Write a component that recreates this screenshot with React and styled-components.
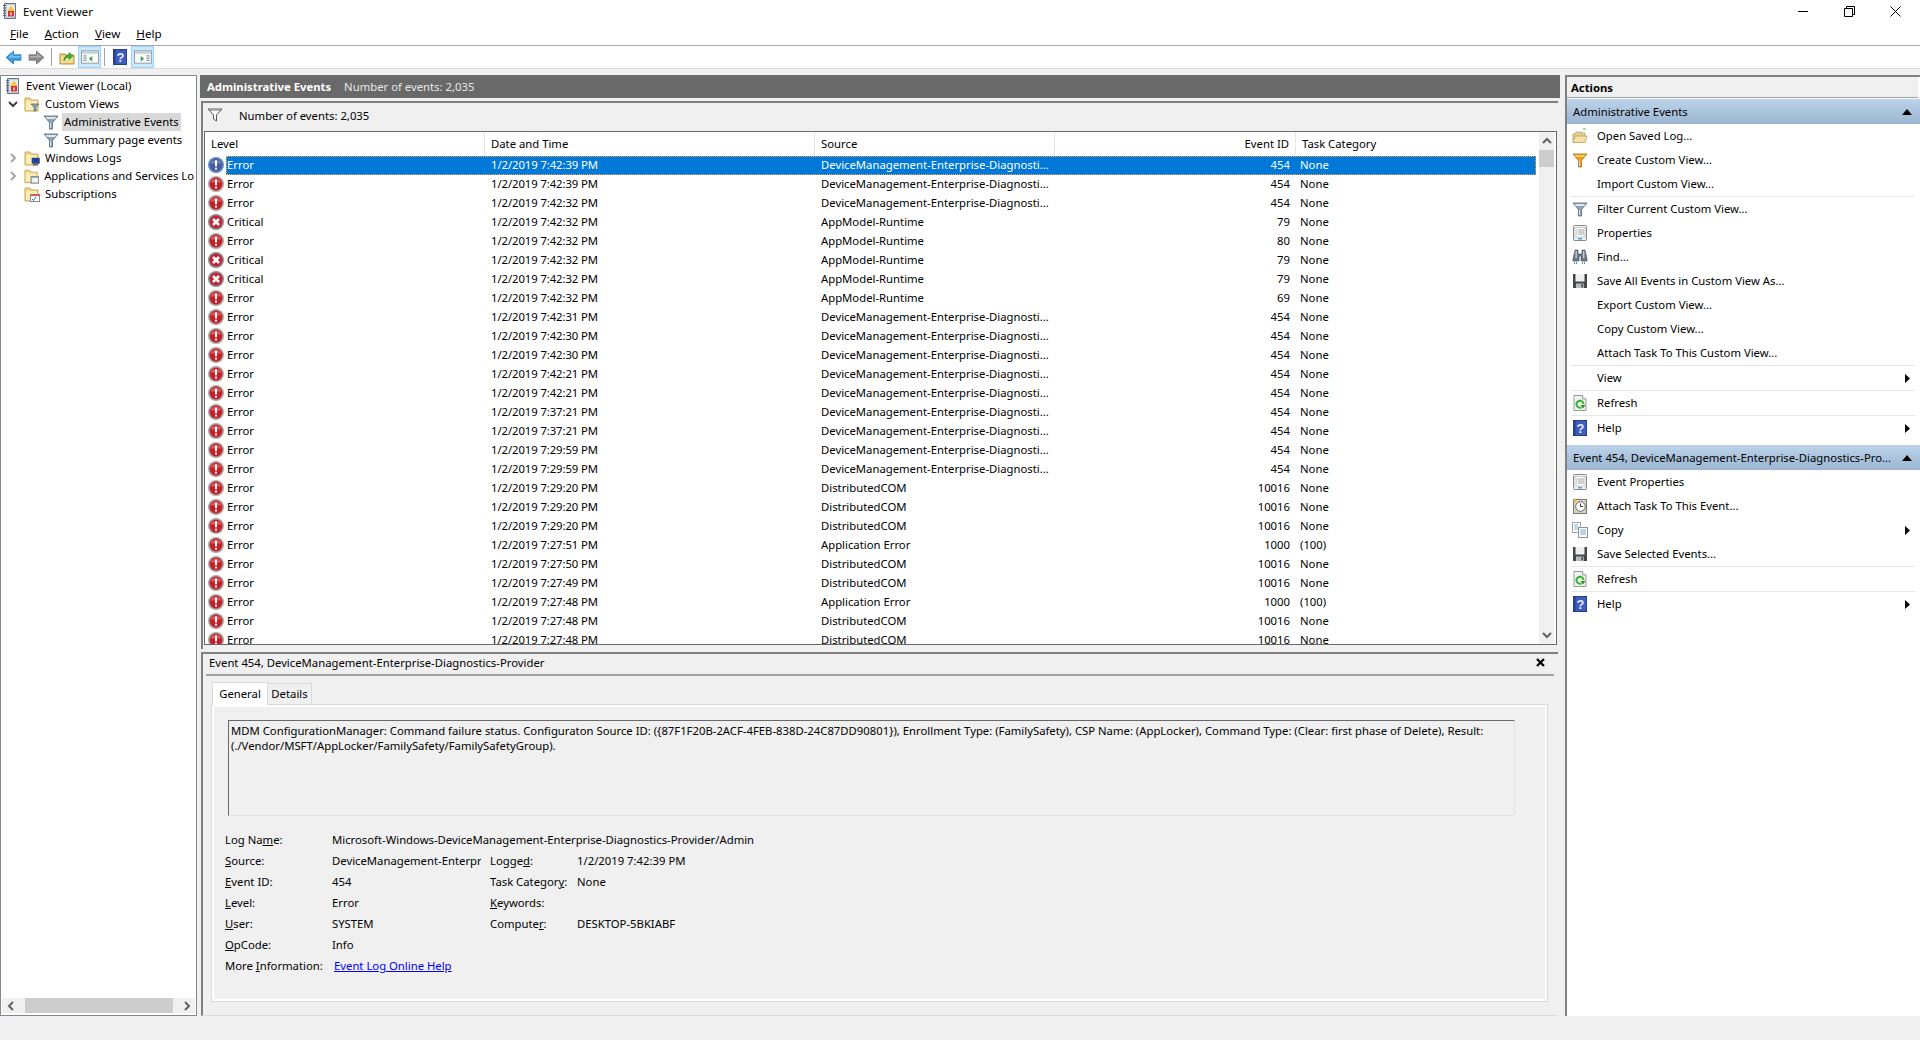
import React from 'react';
import styled, { createGlobalStyle } from 'styled-components';

const GlobalStyle = createGlobalStyle`
  html, body { margin: 0; padding: 0; background: #f0f0f0; overflow: hidden; }
  body { font-family: 'Noto Sans', 'Open Sans', sans-serif; font-size: 11.3px; color: #000; }
  * { box-sizing: border-box; }
  u { text-underline-offset: 1px; }
`;

const Window = styled.div`
  width: 1920px;
  height: 1040px;
  display: flex;
  flex-direction: column;
  background: #f0f0f0;
`;

const TitleBar = styled.div`
  height: 22px;
  background: #fff;
  display: flex;
  align-items: center;
  padding: 0 2px 0 2px;
`;
const TitleText = styled.span`
  margin-left: 5px;
  font-size: 11.6px;
  flex: 1;
`;
const WinButton = styled.div`
  width: 46px;
  height: 22px;
  display: flex;
  align-items: center;
  justify-content: center;
`;

const MenuBar = styled.div`
  height: 24px;
  background: #fff;
  border-bottom: 1px solid #a9a9a9;
  display: flex;
  align-items: center;
  padding: 0 0 0 10px;
  gap: 16px;
  font-size: 11.6px;
`;

const Toolbar = styled.div`
  height: 23px;
  background: #fff;
  border-bottom: 1px solid #dcdcdc;
  display: flex;
  align-items: center;
  padding-left: 2px;
`;
const ToolButton = styled.div`
  width: 23px;
  height: 22px;
  display: flex;
  align-items: center;
  justify-content: center;
  background: ${p => (p.$on ? '#cce8ff' : 'transparent')};
  border: 1px solid ${p => (p.$on ? '#99d1ff' : 'transparent')};
`;
const ToolSep = styled.div`
  width: 1px;
  height: 18px;
  background: #a0a0a0;
  margin: 0 ${p => p.$m || 3}px;
`;

const Main = styled.div`
  flex: 1;
  display: flex;
  padding-top: 6px;
  min-height: 0;
`;

/* left tree */
const TreePanel = styled.div`
  width: 197px;
  height: 941px;
  background: #fff;
  border: 1px solid #828790;
  display: flex;
  flex-direction: column;
`;
const TreeBody = styled.div`
  flex: 1;
  padding-top: 1px;
  overflow: hidden;
`;
const TreeRow = styled.div`
  height: 18px;
  display: flex;
  align-items: center;
  padding-left: ${p => p.$indent}px;
  white-space: nowrap;
`;
const TreeLabel = styled.span`
  margin-left: 3px;
  padding: 0 2px;
  height: 18px;
  line-height: 17px;
  background: ${p => (p.$on ? '#d9d9d9' : 'transparent')};
`;
const Twist = styled.span`
  width: 16px;
  height: 16px;
  margin-right: 3px;
  display: flex;
  align-items: center;
  justify-content: center;
  flex: none;
`;
const HScroll = styled.div`
  height: 15px;
  margin: 0 1px 2px;
  background: #f0f0f0;
  display: flex;
  align-items: center;
  justify-content: space-between;
`;
const HThumb = styled.div`
  width: 148px;
  height: 15px;
  background: #cdcdcd;
`;
const ScrollArrow = styled.span`
  width: 17px;
  height: 15px;
  display: flex;
  align-items: center;
  justify-content: center;
`;

/* center */
const Center = styled.div`
  width: 1360px;
  margin-left: 3px;
  display: flex;
  flex-direction: column;
`;
const DarkHeader = styled.div`
  height: 23px;
  background: #696969;
  color: #fff;
  display: flex;
  align-items: center;
  padding: 0 0 1px 7px;
  flex: none;
`;
const DarkTitle = styled.b`
  font-weight: 700;
`;
const DarkCount = styled.span`
  margin-left: 13px;
  color: #e8e8e8;
`;
const ListPane = styled.div`
  margin: 3px 2px 0 1px;
  height: 548px;
  border-top: 2px solid #808080;
  border-left: 2px solid #808080;
  padding-left: 1px;
  flex: none;
  display: flex;
  flex-direction: column;
`;
const FilterBar = styled.div`
  height: 28px;
  display: flex;
  align-items: center;
  flex: none;
  padding: 0 0 4px 3px;
`;
const FilterText = styled.span`
  margin-left: 16px;
`;
const ListFrame = styled.div`
  height: 514px;
  flex: none;
  margin-right: 1px;
  border: 1px solid #696969;
  background: #fff;
  display: flex;
`;
const ListScroller = styled.div`
  flex: 1;
  min-width: 0;
  overflow: hidden;
  display: flex;
  flex-direction: column;
`;
const HeaderRow = styled.div`
  height: 24px;
  flex: none;
  display: grid;
  grid-template-columns: 280px 330px 240px 241px 241px;
`;
const HeaderCell = styled.div`
  display: flex;
  align-items: center;
  padding: ${p => (p.$right ? '0 6px 1px 0' : '0 0 1px 6px')};
  justify-content: ${p => (p.$right ? 'flex-end' : 'flex-start')};
  border-right: 1px solid #e5e5e5;
`;
const Row = styled.div`
  height: 19px;
  flex: none;
  display: flex;
`;
const RowIcon = styled.div`
  width: 21px;
  flex: none;
  display: flex;
  align-items: center;
  justify-content: center;
  padding-bottom: 1px;
`;
const RowBody = styled.div`
  flex: 1;
  min-width: 0;
  display: grid;
  grid-template-columns: 259px 330px 240px 241px 241px;
  align-items: center;
  padding-bottom: 2px;
  background: ${p => (p.$on ? '#0078d7' : 'transparent')};
  color: ${p => (p.$on ? '#fff' : '#000')};
  outline: ${p => (p.$on ? '1px dotted #f2a65a' : 'none')};
  outline-offset: -1px;
`;
const Cell = styled.div`
  white-space: nowrap;
  overflow: hidden;
  padding-left: ${p => p.$pl ?? 6}px;
  padding-right: ${p => p.$pr ?? 0}px;
  text-align: ${p => (p.$right ? 'right' : 'left')};
  letter-spacing: ${p => (p.$tight ? '-0.08px' : 'normal')};
`;
const VScroll = styled.div`
  width: 15px;
  margin: 0 2px 0 3px;
  background: #f0f0f0;
  display: flex;
  flex-direction: column;
  align-items: center;
  flex: none;
`;
const VArrow = styled.div`
  height: 18px;
  width: 15px;
  flex: none;
  display: flex;
  align-items: center;
  justify-content: center;
`;
const VThumb = styled.div`
  height: 17px;
  width: 15px;
  background: #cdcdcd;
`;
const VSpace = styled.div`
  flex: 1;
`;

const DetailPane = styled.div`
  margin: 3px 2px 0 1px;
  height: 364px;
  flex: none;
  border-top: 2px solid #808080;
  border-left: 2px solid #808080;
  border-bottom: 1px solid #dcdcdc;
  display: flex;
  flex-direction: column;
`;
const DetailTitle = styled.div`
  height: 22px;
  flex: none;
  margin: 0 4px 0 3px;
  border-bottom: 2px solid #a0a0a0;
  display: flex;
  align-items: center;
  justify-content: space-between;
  padding: 0 9px 3px 3px;
`;
const TabStrip = styled.div`
  display: flex;
  align-items: flex-end;
  height: 22px;
  margin: 6px 0 0 9px;
  flex: none;
`;
const Tab = styled.div`
  height: ${p => (p.$on ? 23 : 21)}px;
  width: ${p => (p.$on ? 56 : 44)}px;
  padding-bottom: 2px;
  background: ${p => (p.$on ? '#fff' : '#f0f0f0')};
  border: 1px solid #d9d9d9;
  border-bottom: none;
  border-left-width: ${p => (p.$on ? 1 : 0)}px;
  display: flex;
  align-items: center;
  justify-content: center;
  margin-bottom: ${p => (p.$on ? -1 : 0)}px;
  position: relative;
  z-index: ${p => (p.$on ? 1 : 0)};
`;
const TabPanel = styled.div`
  height: 298px;
  flex: none;
  margin: 0 10px 0 8px;
  border: 1px solid #d9d9d9;
  outline: 2px solid #fff;
  outline-offset: -3px;
  padding: 15px 32px 0 16px;
`;
const MessageBox = styled.div`
  height: 96px;
  border-top: 1px solid #696969;
  border-left: 1px solid #696969;
  border-right: 1px solid #e3e3e3;
  border-bottom: 1px solid #e3e3e3;
  padding: 2px 2px;
  line-height: 15px;
  white-space: nowrap;
  overflow: hidden;
`;
const Fields = styled.div`
  display: grid;
  grid-template-columns: 107px 158px 87px 1fr;
  grid-auto-rows: 21px;
  align-items: center;
  margin: 13px 0 0 -3px;
  white-space: nowrap;
`;
const Value = styled.div`
  white-space: nowrap;
  overflow: hidden;
  grid-column: ${p => p.$span || 'auto'};
  margin-right: ${p => p.$mr || 0}px;
`;
const OnlineHelp = styled.a`
  color: #0000ff;
  text-decoration: underline;
  margin-left: 2px;
`;

/* right */
const ActionsPane = styled.div`
  width: 355px;
  margin-left: 5px;
  height: 941px;
  border-top: 2px solid #808080;
  border-left: 2px solid #808080;
  background: #fff;
  display: flex;
  flex-direction: column;
`;
const ActionsTitle = styled.div`
  height: 21px;
  flex: none;
  background: #f0f0f0;
  border-bottom: 1px solid #a0a0a0;
  font-weight: 700;
  display: flex;
  align-items: center;
  padding-left: 4px;
  margin-right: 2px;
`;
const GroupHeader = styled.div`
  height: 25px;
  flex: none;
  margin: ${p => (p.$top ? '5px 0 0' : '1px 0 0')};
  background: linear-gradient(#bcd3ea, #9bb6d2);
  display: flex;
  align-items: center;
  justify-content: space-between;
  padding: 0 8px 0 6px;
  white-space: nowrap;
`;
const ActionItem = styled.div`
  height: 24px;
  flex: none;
  display: flex;
  align-items: center;
  padding: 0 10px 0 4px;
`;
const ActionIcon = styled.span`
  width: 17px;
  height: 17px;
  flex: none;
  display: flex;
  align-items: center;
  justify-content: center;
  margin-right: 9px;
`;
const ActionText = styled.span`
  flex: 1;
  margin-top: -2px;
`;
const ActionSep = styled.div`
  height: 1px;
  flex: none;
  background: #e6e6e6;
  margin: 0 5px 0 4px;
`;

const StatusBar = styled.div`
  height: 24px;
`;

/* drawings */
const Svg = ({ s = 16, children }) => (
  <svg width={s} height={s} viewBox="0 0 16 16">{children}</svg>
);

const ErrorIcon = ({ on }) => (
  <Svg>
    <circle cx="8" cy="8" r="8" fill={on ? '#5f90c4' : '#a8a8a8'} />
    <circle cx="8" cy="8" r="6.4" fill={on ? '#4a5aa0' : '#c41f28'} />
    <path d="M2.6 6.5a5.6 4.6 0 0 1 10.8 0z" fill={on ? '#7482bc' : '#e4565c'} />
    <rect x="7" y="3.2" width="2" height="6.3" rx=".8" fill="#fff" />
    <rect x="7" y="10.5" width="2" height="2.2" rx=".8" fill="#fff" />
  </Svg>
);
const CriticalIcon = () => (
  <Svg>
    <circle cx="8" cy="8" r="8" fill="#8c8c8c" />
    <circle cx="8" cy="8" r="6.4" fill="#c02436" />
    <path d="M5 5l6 6M11 5l-6 6" stroke="#fff" strokeWidth="2.6" />
  </Svg>
);
const LogIcon = () => (
  <Svg>
    <path d="M2.5 .5h11v15h-11z" fill="#c4cede" stroke="#66748a" />
    <path d="M1 2.5h3M1 5h3M1 7.5h3M1 10h3M1 12.5h3" stroke="#5a6470" />
    <path d="M5 2h8v12H5z" fill="#e6eaf2" />
    <path d="M9 2.5l3.8 6H5.2z" fill="#f2c830" />
    <rect x="6" y="8" width="6" height="5.5" fill="#d03030" />
    <rect x="8.4" y="9.2" width="1.2" height="3.2" fill="#fff" />
  </Svg>
);
const Folder = () => (
  <>
    <path d="M1 2h5l1 2h7v11H1z" fill="#f3d98c" stroke="#c9a855" />
    <rect x="2" y="5" width="11" height="9" fill="#fbeeb8" />
  </>
);
const FolderFilter = () => (
  <Svg>
    <Folder />
    <path d="M7 8h8l-3 3.5V15h-2v-3.5z" fill="#8aa0b4" stroke="#5a6c80" strokeWidth=".7" />
  </Svg>
);
const FolderMonitor = () => (
  <Svg>
    <Folder />
    <rect x="8" y="8" width="7.5" height="5.5" fill="#1c3fa8" stroke="#555" strokeWidth=".6" />
    <rect x="9" y="14" width="5" height="1.5" fill="#666" />
  </Svg>
);
const FolderWindow = () => (
  <Svg>
    <Folder />
    <rect x="7.5" y="8.5" width="8" height="7" fill="#f2f2f2" stroke="#777" />
    <rect x="7.5" y="8.5" width="8" height="1.6" fill="#9aa" />
  </Svg>
);
const FolderCalendar = () => (
  <Svg>
    <Folder />
    <rect x="6.5" y="8.5" width="9" height="7" fill="#fff" stroke="#888" />
    <rect x="6.5" y="8.5" width="9" height="1.6" fill="#d55" />
    <path d="M8 13l1.5 1.5L12 11" stroke="#2a6fd0" fill="none" />
  </Svg>
);
const Funnel = ({ top = '#dfe7ee', body = '#8ea3b6', line = '#53677a' }) => (
  <Svg>
    <path d="M1 2h14L9.5 8.5V15h-3V8.5z" fill={body} stroke={line} strokeWidth=".8" />
    <path d="M2.5 3h11l-1.6 2H4.1z" fill={top} />
    <path d="M7 9h1v5H7z" fill="#dfe7ee" />
  </Svg>
);
const OutlineFunnel = () => (
  <Svg>
    <path d="M1 2h14L9.5 8v6l-3-2V8z" fill="#fff" stroke="#555" />
    <path d="M3 3.5h10" stroke="#aaa" />
  </Svg>
);
const ArrowIcon = ({ right, fill, edge }) => (
  <Svg s={17}>
    <g transform={right ? 'translate(16 0) scale(-1 1)' : undefined}>
      <path d="M1 8l7-6v3.5h7v5H8V14z" fill={fill} stroke={edge} strokeWidth=".8" />
      <path d="M3 8l4.5-4v2.5h7V8z" fill="#fff" opacity=".35" />
    </g>
  </Svg>
);
const FolderUp = () => (
  <Svg>
    <path d="M1 5h5l1 1h8v9H1z" fill="#ecc971" stroke="#b8953f" />
    <rect x="2" y="7" width="12" height="7" fill="#f6dd94" />
    <path d="M5 12c0-4 2-6 5-6V3.5L14 7l-4 3.5V8c-2 0-4 1-5 4z" fill="#3fb33f" stroke="#1d7a1d" strokeWidth=".6" />
  </Svg>
);
const HelpIcon = ({ s = 16 }) => (
  <Svg s={s}>
    <rect x="1.5" y="0.5" width="13" height="15" fill="#3c5cc0" stroke="#2a3f80" />
    <rect x="1.5" y="0.5" width="2" height="15" fill="#2a4088" />
    <text x="8.5" y="13" fontSize="13" fontFamily="Liberation Sans" fontWeight="700" fill="#e8ecff" textAnchor="middle">?</text>
  </Svg>
);
const PaneIcon = ({ right }) => (
  <Svg s={18}>
    <rect x=".5" y="2.5" width="15" height="11" fill="#fafafa" stroke="#8a98a4" strokeWidth=".8" />
    <rect x="1" y="3" width="14" height="2" fill="#c0ccd6" />
    <path d={right ? 'M11 7h3M11 9h3M11 11h3' : 'M2 7h3M2 9h3M2 11h3'} stroke="#8a9aa6" strokeWidth=".9" />
    <path d={right ? 'M6 7l3 2.5-3 2.5z' : 'M10 7L7 9.5l3 2.5z'} fill="#3ba63b" />
  </Svg>
);
const OpenFolder = () => (
  <Svg>
    <path d="M1 6h2l1-2h4l1 1h4v9H1z" fill="#e6cf94" stroke="#b09855" strokeWidth=".7" />
    <path d="M3 8h12l-2 6.5H1z" fill="#f4e1a8" stroke="#b09855" strokeWidth=".7" />
    <path d="M11 1h3" stroke="#3cc83c" />
    <path d="M5 3h6v1H5z" fill="#cfe4f4" />
  </Svg>
);
const PropertiesIcon = () => (
  <Svg>
    <rect x="1.5" y="0.5" width="13" height="15" rx="1" fill="#f2f2f2" stroke="#8a8a8a" />
    <rect x="3" y="2.5" width="10" height="9.5" fill="#fff" stroke="#b5b5b5" strokeWidth=".7" />
    <path d="M6 5h6M6 7h6M6 9h6" stroke="#8a8a8a" strokeWidth=".8" />
    <path d="M4 5h1M4 7h1M4 9h1" stroke="#5a8ac0" strokeWidth=".8" />
    <rect x="6" y="13" width="4" height="1.5" fill="#3aa8e8" />
  </Svg>
);
const BinocularsIcon = () => (
  <Svg>
    <path d="M3 1h3v4h4V1h3l2 9v2H9V7H7v5H1v-2z" fill="#6c7a88" stroke="#3c4650" strokeWidth=".6" />
    <rect x="3.5" y="2" width="1.4" height="7" fill="#c4ccd4" />
    <rect x="11" y="2" width="1.4" height="7" fill="#c4ccd4" />
    <path d="M2 14h4M10 14h4" stroke="#3a98e0" strokeWidth="2" strokeDasharray="1 1" />
  </Svg>
);
const SaveIcon = () => (
  <Svg>
    <path d="M1 1h14v14H1z" fill="#44484c" />
    <rect x="3.5" y="1" width="9" height="7.5" fill="#eef0f2" />
    <rect x="4" y="10.5" width="8" height="4.5" fill="#b8bcc0" />
    <rect x="9.5" y="11" width="1.6" height="3.5" fill="#44484c" />
  </Svg>
);
const RefreshIcon = () => (
  <Svg>
    <path d="M2 .5h8.5l3.5 3.5v11.5H2z" fill="#f2f2f2" stroke="#9a9a9a" />
    <path d="M10.5 .5v3.5H14" fill="#fff" stroke="#9a9a9a" />
    <path d="M11.5 9A3.5 3.5 0 1 0 9.5 12.3" fill="none" stroke="#2fb52f" strokeWidth="2" />
    <path d="M8.5 10h5l-2.5 3.5z" fill="#1f9c1f" />
  </Svg>
);
const ClockIcon = () => (
  <Svg>
    <rect x="1.5" y="1.5" width="13" height="14" fill="#d8d2c2" stroke="#777" />
    <circle cx="8.5" cy="8.5" r="4.8" fill="#fff" stroke="#666" />
    <path d="M8.5 5.5v3h2.5" fill="none" stroke="#333" />
    <path d="M3 0l.8 1.6L5.5 2 3.9 3 3 5 2.2 3 .5 2l1.7-.4z" fill="#f2b82c" />
  </Svg>
);
const CopyIcon = () => (
  <Svg>
    <rect x=".5" y=".5" width="8" height="10" fill="#fff" stroke="#9aa5b0" />
    <path d="M2 3h4M2 5h4M2 7h4" stroke="#6a9ad0" strokeWidth=".8" />
    <rect x="6.5" y="5.5" width="9" height="10" fill="#fff" stroke="#8a95a0" />
    <path d="M8 8h6M8 10h6M8 12h6" stroke="#5a8ac8" strokeWidth=".8" />
  </Svg>
);
const Chevron = ({ dir = 'down', color = '#606060' }) => {
  const d = {
    down: 'M2 4l4 4 4-4',
    up: 'M2 8l4-4 4 4',
    left: 'M8 2L4 6l4 4',
    right: 'M4 2l4 4-4 4',
  }[dir];
  return (
    <svg width="12" height="12" viewBox="0 0 12 12">
      <path d={d} fill="none" stroke={color} strokeWidth="2" />
    </svg>
  );
};
const TriUp = () => (
  <svg width="10" height="6" viewBox="0 0 10 6"><path d="M0 6L5 0l5 6z" fill="#000" /></svg>
);
const TriRight = () => (
  <svg width="5" height="9" viewBox="0 0 5 9"><path d="M0 0l5 4.5L0 9z" fill="#000" /></svg>
);
const CloseX = () => (
  <svg width="9" height="9" viewBox="0 0 9 9"><path d="M1 1l7 7M8 1L1 8" stroke="#000" strokeWidth="2.2" /></svg>
);

const dm = 'DeviceManagement-Enterprise-Diagnosti...';
const dc = 'DistributedCOM';
const am = 'AppModel-Runtime';
const ae = 'Application Error';
const events = [
  ['Error', '7:42:39', dm, 454], ['Error', '7:42:39', dm, 454], ['Error', '7:42:32', dm, 454],
  ['Critical', '7:42:32', am, 79], ['Error', '7:42:32', am, 80], ['Critical', '7:42:32', am, 79],
  ['Critical', '7:42:32', am, 79], ['Error', '7:42:32', am, 69], ['Error', '7:42:31', dm, 454],
  ['Error', '7:42:30', dm, 454], ['Error', '7:42:30', dm, 454], ['Error', '7:42:21', dm, 454],
  ['Error', '7:42:21', dm, 454], ['Error', '7:37:21', dm, 454], ['Error', '7:37:21', dm, 454],
  ['Error', '7:29:59', dm, 454], ['Error', '7:29:59', dm, 454], ['Error', '7:29:20', dc, 10016],
  ['Error', '7:29:20', dc, 10016], ['Error', '7:29:20', dc, 10016], ['Error', '7:27:51', ae, 1000],
  ['Error', '7:27:50', dc, 10016], ['Error', '7:27:49', dc, 10016], ['Error', '7:27:48', ae, 1000],
  ['Error', '7:27:48', dc, 10016], ['Error', '7:27:48', dc, 10016],
];

const Action = ({ icon, text, more }) => (
  <ActionItem>
    <ActionIcon>{icon}</ActionIcon>
    <ActionText>{text}</ActionText>
    {more && <TriRight />}
  </ActionItem>
);

export default function App() {
  return (
    <Window>
      <GlobalStyle />
      <TitleBar>
        <LogIcon />
        <TitleText>Event Viewer</TitleText>
        <WinButton>
          <svg width="11" height="11" viewBox="0 0 11 11"><path d="M0 5.5h10" stroke="#000" /></svg>
        </WinButton>
        <WinButton>
          <svg width="11" height="11" viewBox="0 0 11 11"><path d="M.5 2.5h8v8h-8zM2.5 2.5v-2h8v8h-2" fill="none" stroke="#000" /></svg>
        </WinButton>
        <WinButton>
          <svg width="11" height="11" viewBox="0 0 11 11"><path d="M.5.5l10 10M10.5.5l-10 10" stroke="#000" /></svg>
        </WinButton>
      </TitleBar>
      <MenuBar>
        <span><u>F</u>ile</span>
        <span><u>A</u>ction</span>
        <span><u>V</u>iew</span>
        <span><u>H</u>elp</span>
      </MenuBar>
      <Toolbar>
        <ToolButton><ArrowIcon fill="#3a9ee8" edge="#2078c0" /></ToolButton>
        <ToolButton><ArrowIcon right fill="#8a8a8a" edge="#707070" /></ToolButton>
        <ToolSep />
        <ToolButton><FolderUp /></ToolButton>
        <ToolButton $on><PaneIcon /></ToolButton>
        <ToolSep $m={3} />
        <ToolButton><HelpIcon /></ToolButton>
        <ToolButton $on><PaneIcon right /></ToolButton>
      </Toolbar>
      <Main>
        <TreePanel>
          <TreeBody>
            <TreeRow $indent={4}><LogIcon /><TreeLabel>Event Viewer (Local)</TreeLabel></TreeRow>
            <TreeRow $indent={4}><Twist><Chevron dir="down" color="#404040" /></Twist><FolderFilter /><TreeLabel>Custom Views</TreeLabel></TreeRow>
            <TreeRow $indent={42}><Funnel /><TreeLabel $on>Administrative Events</TreeLabel></TreeRow>
            <TreeRow $indent={42}><Funnel /><TreeLabel>Summary page events</TreeLabel></TreeRow>
            <TreeRow $indent={4}><Twist><Chevron dir="right" color="#a6a6a6" /></Twist><FolderMonitor /><TreeLabel>Windows Logs</TreeLabel></TreeRow>
            <TreeRow $indent={4}><Twist><Chevron dir="right" color="#a6a6a6" /></Twist><FolderWindow /><TreeLabel>Applications and Services Lo</TreeLabel></TreeRow>
            <TreeRow $indent={23}><FolderCalendar /><TreeLabel>Subscriptions</TreeLabel></TreeRow>
          </TreeBody>
          <HScroll>
            <ScrollArrow><Chevron dir="left" /></ScrollArrow>
            <HThumb />
            <ScrollArrow><Chevron dir="right" /></ScrollArrow>
          </HScroll>
        </TreePanel>

        <Center>
          <DarkHeader>
            <DarkTitle>Administrative Events</DarkTitle>
            <DarkCount>Number of events: 2,035</DarkCount>
          </DarkHeader>
          <ListPane>
            <FilterBar>
              <OutlineFunnel />
              <FilterText>Number of events: 2,035</FilterText>
            </FilterBar>
            <ListFrame>
              <ListScroller>
                <HeaderRow>
                  <HeaderCell>Level</HeaderCell>
                  <HeaderCell>Date and Time</HeaderCell>
                  <HeaderCell>Source</HeaderCell>
                  <HeaderCell $right>Event ID</HeaderCell>
                  <HeaderCell>Task Category</HeaderCell>
                </HeaderRow>
                {events.map(([level, time, source, id], i) => (
                  <Row key={i}>
                    <RowIcon>{level === 'Critical' ? <CriticalIcon /> : <ErrorIcon on={i === 0} />}</RowIcon>
                    <RowBody $on={i === 0}>
                      <Cell $pl={1}>{level}</Cell>
                      <Cell $tight>{`1/2/2019 ${time} PM`}</Cell>
                      <Cell>{source}</Cell>
                      <Cell $right $pr={6}>{id}</Cell>
                      <Cell $pl={4}>{id === 1000 ? '(100)' : 'None'}</Cell>
                    </RowBody>
                  </Row>
                ))}
              </ListScroller>
              <VScroll>
                <VArrow><Chevron dir="up" /></VArrow>
                <VThumb />
                <VSpace />
                <VArrow><Chevron dir="down" /></VArrow>
              </VScroll>
            </ListFrame>
          </ListPane>
          <DetailPane>
            <DetailTitle>
              <span>Event 454, DeviceManagement-Enterprise-Diagnostics-Provider</span>
              <CloseX />
            </DetailTitle>
            <TabStrip>
              <Tab $on>General</Tab>
              <Tab>Details</Tab>
            </TabStrip>
            <TabPanel>
              <MessageBox>
                MDM ConfigurationManager: Command failure status. Configuraton Source ID: ({'{'}87F1F20B-2ACF-4FEB-838D-24C87DD90801{'}'}), Enrollment Type: (FamilySafety), CSP Name: (AppLocker), Command Type: (Clear: first phase of Delete), Result:
                <br />
                (./Vendor/MSFT/AppLocker/FamilySafety/FamilySafetyGroup).
              </MessageBox>
              <Fields>
                <div>Log Na<u>m</u>e:</div>
                <Value $span="2 / 5">Microsoft-Windows-DeviceManagement-Enterprise-Diagnostics-Provider/Admin</Value>
                <div><u>S</u>ource:</div>
                <Value $mr={9}>DeviceManagement-Enterprise-Diagnostics-Provider</Value>
                <div>Logge<u>d</u>:</div>
                <Value>1/2/2019 7:42:39 PM</Value>
                <div><u>E</u>vent ID:</div>
                <Value>454</Value>
                <div>Task Categor<u>y</u>:</div>
                <Value>None</Value>
                <div><u>L</u>evel:</div>
                <Value>Error</Value>
                <div><u>K</u>eywords:</div>
                <Value />
                <div><u>U</u>ser:</div>
                <Value>SYSTEM</Value>
                <div>Compute<u>r</u>:</div>
                <Value>DESKTOP-5BKIABF</Value>
                <div><u>O</u>pCode:</div>
                <Value $span="2 / 5">Info</Value>
                <div>More <u>I</u>nformation:</div>
                <Value $span="2 / 5"><OnlineHelp href="#help">Event Log Online Help</OnlineHelp></Value>
              </Fields>
            </TabPanel>
          </DetailPane>
        </Center>

        <ActionsPane>
          <ActionsTitle>Actions</ActionsTitle>
          <GroupHeader>Administrative Events<TriUp /></GroupHeader>
          <Action icon={<OpenFolder />} text="Open Saved Log..." />
          <Action icon={<Funnel top="#ffd060" body="#f0a020" line="#a07020" />} text="Create Custom View..." />
          <Action text="Import Custom View..." />
          <ActionSep />
          <Action icon={<Funnel />} text="Filter Current Custom View..." />
          <Action icon={<PropertiesIcon />} text="Properties" />
          <Action icon={<BinocularsIcon />} text="Find..." />
          <Action icon={<SaveIcon />} text="Save All Events in Custom View As..." />
          <Action text="Export Custom View..." />
          <Action text="Copy Custom View..." />
          <Action text="Attach Task To This Custom View..." />
          <ActionSep />
          <Action text="View" more />
          <ActionSep />
          <Action icon={<RefreshIcon />} text="Refresh" />
          <ActionSep />
          <Action icon={<HelpIcon />} text="Help" more />
          <GroupHeader $top>Event 454, DeviceManagement-Enterprise-Diagnostics-Pro...<TriUp /></GroupHeader>
          <Action icon={<PropertiesIcon />} text="Event Properties" />
          <Action icon={<ClockIcon />} text="Attach Task To This Event..." />
          <Action icon={<CopyIcon />} text="Copy" more />
          <Action icon={<SaveIcon />} text="Save Selected Events..." />
          <ActionSep />
          <Action icon={<RefreshIcon />} text="Refresh" />
          <ActionSep />
          <Action icon={<HelpIcon />} text="Help" more />
        </ActionsPane>
      </Main>
      <StatusBar />
    </Window>
  );
}
